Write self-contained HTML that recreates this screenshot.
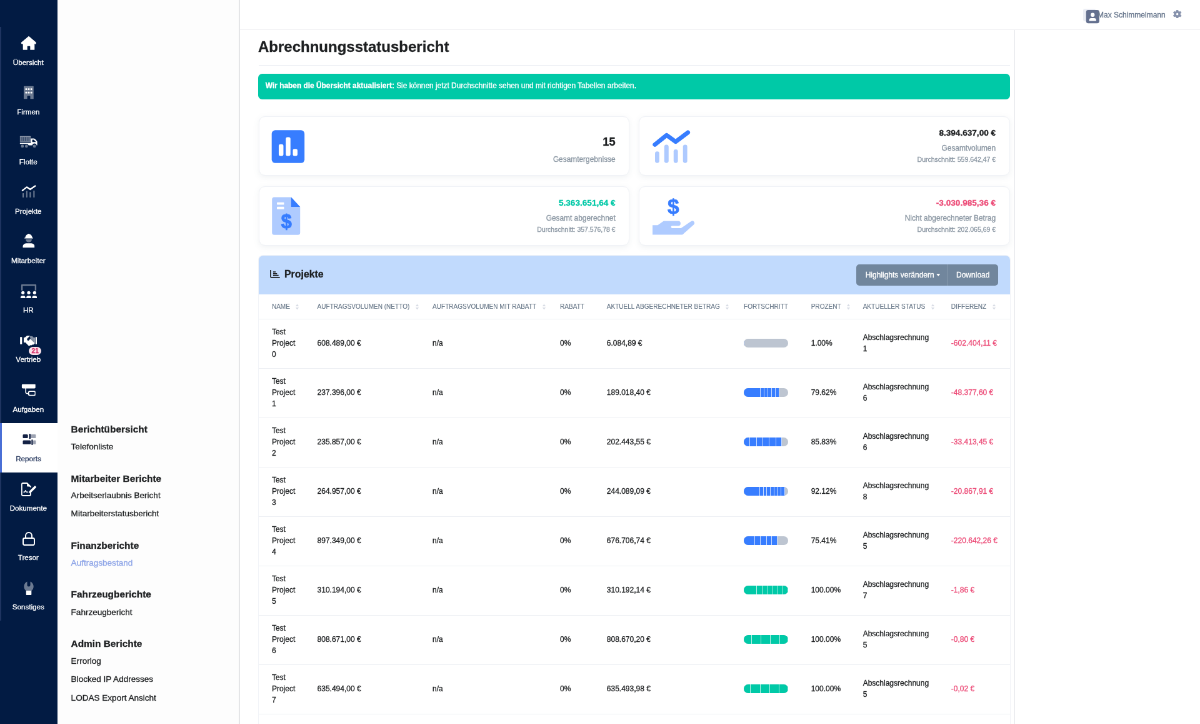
<!DOCTYPE html>
<html lang="de">
<head>
<meta charset="utf-8">
<title>Abrechnungsstatusbericht</title>
<style>
*{box-sizing:border-box;margin:0;padding:0}
html,body{width:1200px;height:724px;overflow:hidden;background:#fff}
body{font-family:"Liberation Sans",Arial,Helvetica,sans-serif;color:#1e2022;-webkit-text-stroke-width:.32px}
#app{position:absolute;left:0;top:0;width:1920px;height:1159px;transform:scale(.625);transform-origin:0 0;overflow:hidden;will-change:transform}
a{text-decoration:none;color:inherit}
/* sidebar */
.sb{position:absolute;left:0;top:0;width:92px;height:1159px;background:#021b43}
.nav{position:absolute;left:0;top:43.1px;width:91.4px;border-left:2.4px solid #1f3460}
.ni{display:block;position:relative;height:79.2px;color:#fff;margin-left:-2.4px;width:92px}
.ni .ic{position:absolute;left:45.9px;top:25.6px;transform:translate(-50%,-50%);line-height:0}
.ni .lb{position:absolute;left:0;width:91.4px;top:48.1px;text-align:center;font-size:11.6px;line-height:17.4px;color:#fff;-webkit-text-stroke-width:.3px}
.ni.act{background:#fff;color:#132144;border-left:3px solid #4a6fd6}
.ni.act .ic{left:43.9px}
.ni.act .lb{color:#1f3158;left:-2.8px;top:48.4px}
.bdg{position:absolute;left:46.7px;top:36.3px;width:19.8px;height:13.9px;border-radius:7px;background:#fbe2ea;color:#d6336c;font-size:10.2px;font-weight:700;line-height:13.9px;text-align:center}
/* submenu */
.sub{position:absolute;left:92px;top:0;width:291.8px;height:1159px;background:#fdfdfd;border-right:2px solid #e4e5e7;z-index:2}
.sub b,.sub span{position:absolute;left:21.6px;white-space:nowrap}
.sub b{font-size:15.4px;line-height:20px;color:#1e2022;font-weight:700}
.sub span{font-size:13.55px;line-height:20px;color:#1e2022}
.sub span.on{color:#8fa6e8}
/* header */
.hd{position:absolute;left:382px;top:0;width:1538px;height:48px;border-bottom:1.4px solid #eff0f2;background:#fff}
.hd .nm{position:absolute;left:1374px;top:16.6px;font-size:12px;line-height:14px;color:#67768c;white-space:nowrap}
/* main */
.main{position:absolute;left:382px;top:48px;width:1242.4px;height:1111px;background:#fff;border-left:0;border-right:1.8px solid #e4e5ea}
h1{position:absolute;left:31px;top:12.7px;font-size:24px;line-height:28px;font-weight:700;color:#1e2022;white-space:nowrap}
.hr{position:absolute;left:31.5px;top:56px;width:1202.8px;height:1.2px;background:#eceef3}
.al{position:absolute;left:30.8px;top:70.2px;width:1203.5px;height:40.6px;border-radius:6.5px;background:#00c9a7;color:#fff;font-size:11.9px;line-height:39.4px;padding-left:12px;white-space:nowrap}
.cd{position:absolute;width:593.6px;height:94.6px;background:#fff;border:1px solid #f0f2f7;border-radius:10px;box-shadow:0 2.5px 8px rgba(140,152,164,.11)}
.cd .v{position:absolute;right:21.5px;font-weight:700;white-space:nowrap;color:#1e2022}
.cd .l{position:absolute;right:21.5px;font-size:11.9px;line-height:14px;color:#8c98a4;white-space:nowrap}
.cd .s{position:absolute;right:21.5px;font-size:10.5px;line-height:12px;color:#8c98a4;white-space:nowrap}
.cd svg{position:absolute;left:-1.3px;top:-.9px}
.tc{position:absolute;left:31.6px;top:360.5px;width:1202.8px;height:900px;border-radius:7px 7px 0 0;background:#fff;box-shadow:0 0 0 1px #f2f4f8}
.th{position:absolute;left:0;top:0;width:100%;height:62px;background:#c1dafd;border-radius:7px 7px 0 0}
.th .ti{position:absolute;left:41.4px;top:20.4px;font-size:15.9px;font-weight:700;line-height:20px;color:#1e2022}
.bg{position:absolute;right:19.2px;top:14px;height:34px;display:flex;border-radius:5px;overflow:hidden}
.bg span{display:block;height:34px;line-height:34px;background:#71869d;color:#fff;font-size:12px;padding:0 14.4px;white-space:nowrap}
.bg span+span{border-left:1.4px solid #8a9cb0}
table{position:absolute;left:0;top:62px;width:1202.8px;border-collapse:collapse;table-layout:fixed}
th{-webkit-text-stroke-width:.12px;height:40px;text-align:left;font-weight:400;font-size:10.05px;color:#677788;padding:0 0 0 12px;white-space:nowrap;border-bottom:1.2px solid #edeff4;vertical-align:middle;line-height:15px}
td{height:79px;font-size:12px;line-height:17.8px;padding:0 0 0 12px;border-bottom:1.2px solid #edeff4;vertical-align:middle;color:#1e2022;white-space:nowrap}
th:first-child,td:first-child{padding-left:21.3px}
td.dg{color:#ed4c78}
.so{margin-left:8.5px;vertical-align:-2.4px}
.pb{width:71.2px;height:14px;border-radius:7px;background:#bdc5d1;overflow:hidden;display:flex;position:relative;top:-1px;left:-.2px}
.sg{display:block;height:14px;background:#377dff;border-right:1.5px solid rgba(255,255,255,.72)}
.sg.g{background:#00c9a7}
</style>
</head>
<body>
<div id="app">
<div class="sb"><div class="nav">
<a class="ni"><span class="ic"><svg width="24.8" height="22.7" viewBox="0 0 24.8 22.7" fill="currentColor"><path d="M12.4 0 .2 10.4a.8.8 0 0 0-.1 1.100l1 1.200a.8.8 0 0 0 1.100.100l.9-.700v9.600a1 1 0 0 0 1 1h5.400a.6.6 0 0 0 .6-.6v-5.300a.6.6 0 0 1 .6-.6h3.400a.6.6 0 0 1 .6.600v5.300a.6.6 0 0 0 .6.600h5.400a1 1 0 0 0 1-1v-9.600l.9.700a.8.8 0 0 0 1.100-.100l1-1.200a.8.800 0 0 0-.1-1.100z"/></svg></span><span class="lb">Übersicht</span></a>
<a class="ni"><span class="ic"><svg width="16.6" height="21" viewBox="0 0 16.6 21" fill="currentColor"><path opacity=".42" d="M1.4 0h13.8a1.4 1.4 0 0 1 1.4 1.4V21h-5.9v-4.3a.9.9 0 0 0-.9-.9H6.8a.9.9 0 0 0-.9.9V21H0V1.4A1.4 1.4 0 0 1 1.4 0z"/><rect x="2.85" y="3.75" width="2.7" height="2.7" rx=".5"/><rect x="6.95" y="3.75" width="2.7" height="2.7" rx=".5"/><rect x="11.05" y="3.75" width="2.7" height="2.7" rx=".5"/><rect x="2.85" y="9.35" width="2.7" height="2.7" rx=".5"/><rect x="6.95" y="9.35" width="2.7" height="2.7" rx=".5"/><rect x="11.05" y="9.35" width="2.7" height="2.7" rx=".5"/></svg></span><span class="lb">Firmen</span></a>
<a class="ni"><span class="ic"><svg width="28.8" height="19.2" viewBox="0 0 28.8 19.2" fill="currentColor"><path opacity=".42" d="M.8 0h16a.8.8 0 0 1 .8.8v8.8H0V.8A.8.8 0 0 1 .8 0z"/><path fill="#021b43" opacity=".6" d="M2.9 1.800h1v6.600h-1zM5.700 1.800h1v6.600h-1zM8.500 1.800h1v6.600h-1zM11.300 1.800h1v6.600h-1zM14.100 1.800h1v6.600h-1z"/><path opacity=".25" d="M0 .8A.8.8 0 0 1 .8 0h16a.8.8 0 0 1 .8.800v.800H0z"/><path d="M0 11h17.6V4.6a.6.6 0 0 1 .6-.6h4.3c.6 0 1.2.3 1.6.7l4 4.2c.4.4.7 1 .7 1.600v3.700a.8.8 0 0 1-.8.8h-1a3.500 3.500 0 0 0-6.900 0H14.200a3.400 3.400 0 0 0-3.400-2.100H0zM20 6v3.800h6L22.800 6.400a1 1 0 0 0-.7-.4z" fill-rule="evenodd"/><g opacity=".42"><circle cx="4.200" cy="16.600" r="2.400"/><circle cx="10.700" cy="16.600" r="2.400"/><circle cx="23.500" cy="16.600" r="2.400"/></g></svg></span><span class="lb">Flotte</span></a>
<a class="ni"><span class="ic"><svg width="23.2" height="20" viewBox="0 0 23.2 20" fill="currentColor"><path d="M1.300 8.800 8.400 3.300 13.900 7 21.900 1.500" fill="none" stroke="currentColor" stroke-width="2.300" stroke-linecap="round" stroke-linejoin="round"/><g opacity=".42"><rect x="1.600" y="13" width="2.100" height="7" rx=".6"/><rect x="7.400" y="9.300" width="2.100" height="10.700" rx=".6"/><rect x="12.900" y="11.200" width="2.100" height="8.800" rx=".6"/><rect x="18.900" y="8.800" width="2.100" height="11.200" rx=".6"/></g></svg></span><span class="lb">Projekte</span></a>
<a class="ni"><span class="ic"><svg width="19.5" height="22.7" viewBox="0 0 19.5 22.7" fill="currentColor"><path d="M9.750 0a1 1 0 0 1 1 .9c2.600.6 4.500 2.900 4.700 5.700h.600a.6.6 0 0 1 .6.6v.6H2.850v-.6a.6.6 0 0 1 .6-.6h.6C4.250 3.800 6.150 1.500 8.750.9a1 1 0 0 1 1-.9z"/><path opacity=".42" d="M4.750 9h10a5 5 0 0 1-10 0z"/><path d="M5.600 15.700h8.300a5.600 5.600 0 0 1 5.600 5.600v.4a1 1 0 0 1-1 1H1a1 1 0 0 1-1-1v-.4a5.600 5.600 0 0 1 5.600-5.600z"/></svg></span><span class="lb">Mitarbeiter</span></a>
<a class="ni"><span class="ic" style="top:26.6px"><svg width="27.8" height="22.2" viewBox="0 0 27.8 22.2" fill="currentColor"><path opacity=".42" d="M3 0h21.800a1.200 1.200 0 0 1 1.200 1.200V9.800h-2.400V2.400H4.200v7.400H1.800V1.200A1.200 1.200 0 0 1 3 0z"/><circle cx="4.6" cy="13.400" r="2.600"/><path d="M0.7 22.200v-.8a3.400 3.400 0 0 1 3.400-3.400h1a3.400 3.400 0 0 1 3.400 3.400v.8z"/><circle cx="13.9" cy="13.400" r="2.600"/><path d="M10 22.200v-.8a3.400 3.400 0 0 1 3.400-3.400h1a3.400 3.400 0 0 1 3.400 3.400v.8z"/><circle cx="23.2" cy="13.400" r="2.600"/><path d="M19.3 22.200v-.8a3.400 3.400 0 0 1 3.400-3.400h1a3.400 3.400 0 0 1 3.400 3.400v.8z"/></svg></span><span class="lb">HR</span></a>
<a class="ni"><span class="ic" style="top:26.4px"><svg width="27.8" height="16.2" viewBox="0 0 27.8 16.2" fill="currentColor"><path d="M0 2.300h3.200v11.600H0zM24.600 2.300h3.200v11.600h-3.200z"/><g transform="translate(0,.2) scale(1,1.16)"><path d="M5.800 2.600h1.800l2.600-2.100a2 2 0 0 1 1.300-.5h4.600l-4.400 3.800a1.900 1.900 0 0 0 2.500 2.800l2.300-2 5.800 4.700v-6.700h1.100v8.800h-1.200l-.3.500c-.6.700-1.600.8-2.300.3l-.3.400c-.6.800-1.800.9-2.600.3l-.8.800c-.8.700-2 .600-2.700-.200l-4.600-4H5.800z"/><path d="M15.300.6h3.600c.5 0 1 .2 1.400.5l2.200 2v7.600l-5.500-4.500-2.700 2.300a1 1 0 0 1-1.400-1.500l3.700-3.200z" opacity=".5"/></g></svg></span><span class="bdg">21</span><span class="lb">Vertrieb</span></a>
<a class="ni"><span class="ic" style="top:26.8px"><svg width="22.7" height="19" viewBox="0 0 22.7 19" fill="currentColor"><rect x="0" y="0" width="22.700" height="6.900" rx="2.200"/><path d="M6.500 6.500v6.600a2 2 0 0 0 2 2h2" fill="none" stroke="currentColor" stroke-width="1.600"/><rect x="11.100" y="11.700" width="10.700" height="6.400" rx="2" fill="none" stroke="currentColor" stroke-width="1.800"/></svg></span><span class="lb">Aufgaben</span></a>
<a class="ni act"><span class="ic" style="top:26.5px"><svg width="21.4" height="18" viewBox="0 0 21.4 18" fill="currentColor"><rect x="0" y="1" width="8.400" height="6" rx="1.500"/><rect x="10.200" y="0" width="2.400" height="8.200" rx=".8"/><rect opacity=".42" x="12.600" y="1" width="8.800" height="6" rx="1.500"/><rect x="0" y="10.500" width="13" height="6.200" rx="1.500"/><rect x="14" y="9.200" width="2.200" height="8.800" rx=".8"/><rect opacity=".42" x="16.200" y="10.500" width="5.200" height="6.200" rx="1.500"/></svg></span><span class="lb">Reports</span></a>
<a class="ni"><span class="ic" style="top:27.0px"><svg width="24.2" height="21.8" viewBox="0 0 24.2 21.8" fill="currentColor"><path d="M14.900 15.500v3.600a1.800 1.800 0 0 1-1.800 1.800H2.700A1.800 1.800 0 0 1 .9 19.100V2.700A1.800 1.800 0 0 1 2.700.9h6.700l5.500 5.500v1.200" fill="none" stroke="currentColor" stroke-width="1.800" stroke-linejoin="round"/><path d="M9.200.9v4.200a1.300 1.300 0 0 0 1.300 1.300h4.400z"/><path d="M4 15.200h1.600l1.200-2.600 1.600 2.600h2.400" fill="none" stroke="currentColor" stroke-width="1.400" stroke-linejoin="round" stroke-linecap="round"/><path d="M12.300 16.900l.5-3 8.300-8.300a1.300 1.300 0 0 1 1.800 0l.7.700a1.300 1.300 0 0 1 0 1.800l-8.300 8.300z"/></svg></span><span class="lb">Dokumente</span></a>
<a class="ni"><span class="ic" style="top:27.2px"><svg width="20" height="22.2" viewBox="0 0 20 22.2" fill="currentColor"><rect x="1" y="10.200" width="18" height="11" rx="2.400" fill="none" stroke="currentColor" stroke-width="2"/><path d="M5 10V6.200a5 5 0 0 1 10 0V10" fill="none" stroke="currentColor" stroke-width="2"/></svg></span><span class="lb">Tresor</span></a>
<a class="ni"><span class="ic" style="top:27.0px"><svg width="17.6" height="22.2" viewBox="0 0 17.6 22.2" fill="currentColor"><path opacity=".42" d="M6.300.500v5.600a2.500 2.500 0 0 0 5 0V.5a8.800 8.800 0 0 1 2.600 14.200l-.700.700v.800H4.400v-.800l-.700-.700A8.800 8.800 0 0 1 6.300.5z"/><rect x="4.500" y="15" width="8.600" height="7.200" rx="1"/></svg></span><span class="lb">Sonstiges</span></a>
</div></div>
<div class="sub">
<b style="top:677.4px">Berichtübersicht</b>
<span style="top:705.4px">Telefonliste</span>
<b style="top:755.6px">Mitarbeiter Berichte</b>
<span style="top:783.4px">Arbeitserlaubnis Bericht</span>
<span style="top:812.4px">Mitarbeiterstatusbericht</span>
<b style="top:862.8px">Finanzberichte</b>
<span class="on" style="top:890.8px">Auftragsbestand</span>
<b style="top:941.2px">Fahrzeugberichte</b>
<span style="top:969.8px">Fahrzeugbericht</span>
<b style="top:1019.9px">Admin Berichte</b>
<span style="top:1047.9px">Errorlog</span>
<span style="top:1077.4px">Blocked IP Addresses</span>
<span style="top:1106.6px">LODAS Export Ansicht</span>
</div>
<div class="hd">
<svg style="position:absolute;left:1350.5px;top:14px" width="27" height="24" viewBox="0 0 27 24"><rect x="0" y="0" width="20" height="20" rx="3" fill="#eceef5"/><rect x="4.7" y="2" width="21.2" height="21.2" rx="3.4" fill="#64708f"/><circle cx="15.2" cy="9.800" r="3.200" fill="#fff"/><path d="M9.600 19.500v-1.200a3.200 3.200 0 0 1 3.200-3.200h4.800a3.200 3.200 0 0 1 3.200 3.200v1.200z" fill="#fff"/></svg>
<span class="nm">Max Schimmelmann</span>
<svg style="position:absolute;left:1494.700px;top:15.800px" width="13.200" height="13.200" viewBox="0 0 13.200 13.200"><path d="M5.29 0.13 7.91 0.13 8.05 1.92 9.93 3.00 11.55 2.23 12.86 4.50 11.38 5.51 11.38 7.69 12.86 8.70 11.55 10.97 9.93 10.19 8.05 11.28 7.91 13.07 5.29 13.07 5.15 11.28 3.27 10.20 1.65 10.97 0.34 8.70 1.82 7.69 1.82 5.51 0.34 4.50 1.65 2.23 3.27 3.01 5.15 1.92z M6.600 4.400a2.200 2.200 0 1 0 0 4.400 2.200 2.200 0 0 0 0-4.400z" fill="#8590ab" fill-rule="evenodd" stroke="#8590ab" stroke-width=".8" stroke-linejoin="round"/></svg>
</div>
<div class="main">
<h1>Abrechnungsstatusbericht</h1>
<div class="hr"></div>
<div class="al"><b>Wir haben die Übersicht aktualisiert:</b> Sie können jetzt Durchschnitte sehen und mit richtigen Tabellen arbeiten.</div>

<div class="cd" style="left:31.6px;top:138.3px">
<svg width="100" height="94" viewBox="0 0 100 94"><rect x="21.700" y="22.300" width="52.500" height="52.500" rx="5.600" fill="#377dff"/><g fill="#fff"><rect x="32.950" y="44.800" width="7.500" height="18.750" rx="2.800"/><rect x="44.200" y="33.550" width="7.500" height="30" rx="2.800"/><rect x="55.450" y="52.300" width="7.500" height="11.250" rx="2.800"/></g></svg>
<div class="v" style="top:28.5px;font-size:18.3px;line-height:22px">15</div>
<div class="l" style="top:60.6px">Gesamtergebnisse</div>
</div>

<div class="cd" style="left:640px;top:138.3px">
<svg width="100" height="94" viewBox="0 0 100 94"><g fill="#377dff" opacity=".4"><rect x="26" y="56.300" width="6.900" height="18.400" rx="3.400"/><rect x="40.850" y="45.400" width="6.900" height="29.300" rx="3.400"/><rect x="55.750" y="52.900" width="6.900" height="21.800" rx="3.400"/><rect x="70.750" y="45.400" width="6.900" height="29.300" rx="3.400"/></g><path d="M25.800 45.400 44.600 30.300 59 40.700 78.600 25.900" fill="none" stroke="#377dff" stroke-width="6.900" stroke-linecap="round" stroke-linejoin="round"/></svg>
<div class="v" style="top:18.1px;font-size:13.6px;line-height:16px">8.394.637,00 €</div>
<div class="l" style="top:42.5px">Gesamtvolumen</div>
<div class="s" style="top:61.5px">Durchschnitt: 559.642,47 €</div>
</div>

<div class="cd" style="left:31.6px;top:250px">
<svg width="100" height="94" viewBox="0 0 100 94"><path d="M25.700 17.500H52.800L67.200 33v41.300a3.500 3.500 0 0 1-3.500 3.500H25.700a3.500 3.500 0 0 1-3.500-3.500V21a3.500 3.500 0 0 1 3.500-3.500z" fill="#377dff" opacity=".4"/><path d="M52.800 17.500 67.200 33H52.800z" fill="#377dff"/><rect x="30" y="25.800" width="11.500" height="3.700" rx=".8" fill="#fff"/><rect x="30" y="32.800" width="11.500" height="3.900" rx=".8" fill="#fff"/><text x="45.200" y="67.200" text-anchor="middle" font-family="Liberation Sans, sans-serif" font-weight="700" font-size="30.500" fill="#377dff" stroke="#377dff" stroke-width="1.100" stroke-linejoin="round">$</text></svg>
<div class="v" style="top:18.1px;font-size:13.6px;line-height:16px;color:#00c9a7">5.363.651,64 €</div>
<div class="l" style="top:42.5px">Gesamt abgerechnet</div>
<div class="s" style="top:61.5px">Durchschnitt: 357.576,78 €</div>
</div>

<div class="cd" style="left:640px;top:250px">
<svg width="100" height="94" viewBox="0 0 100 94"><path d="M22.100 62.300h8.200l9.700-6.700h23a3.850 3.850 0 0 1 0 7.700H53.300a1.800 1.800 0 0 0 0 3.600h14.400l16.100-10.900a3.400 3.400 0 0 1 4.100 5.400L69.900 77.500H22.100z" fill="#377dff" opacity=".4"/><text x="55.400" y="43.600" text-anchor="middle" font-family="Liberation Sans, sans-serif" font-weight="700" font-size="33.500" fill="#377dff" stroke="#377dff" stroke-width=".700" stroke-linejoin="round">$</text></svg>
<div class="v" style="top:18.1px;font-size:13.6px;line-height:16px;color:#ed4c78">-3.030.985,36 €</div>
<div class="l" style="top:42.5px">Nicht abgerechneter Betrag</div>
<div class="s" style="top:61.5px">Durchschnitt: 202.065,69 €</div>
</div>

<div class="tc">
<div class="th">
<svg style="position:absolute;left:18.6px;top:23.1px" width="15.8" height="13" viewBox="0 0 17 14"><path d="M1 0v11.500a1.300 1.300 0 0 0 1.300 1.300H16.200" fill="none" stroke="#1e2022" stroke-width="1.800" stroke-linecap="round"/><path d="M5.300 3.400h4.400M5.300 6.300h6.800M5.300 9.200h9.400" fill="none" stroke="#1e2022" stroke-width="1.900"/></svg>
<span class="ti">Projekte</span>
<div class="bg"><span style="padding:0 10.9px 0 14.6px">Highlights verändern <svg width="6.6" height="4" viewBox="0 0 8 5" style="vertical-align:2px;margin-left:-.4px;margin-right:-.4px"><path d="M0 0h8L4 5z" fill="#fff"/></svg></span><span style="padding:0 13.8px 0 14.3px">Download</span></div>
</div>
<table>
<colgroup><col style="width:82px"><col style="width:184.500px"><col style="width:204px"><col style="width:74.700px"><col style="width:219.300px"><col style="width:107.600px"><col style="width:83px"><col style="width:141.200px"><col style="width:106.500px"></colgroup>
<thead><tr><th>NAME<svg class="so" width="7" height="10" viewBox="0 0 7 10"><path d="M3.5 0.6 6.2 4H0.8zM3.5 9.4 0.8 6h5.4z" fill="#d9dde6"/></svg></th><th>AUFTRAGSVOLUMEN (NETTO)<svg class="so" width="7" height="10" viewBox="0 0 7 10"><path d="M3.5 0.6 6.2 4H0.8zM3.5 9.4 0.8 6h5.4z" fill="#d9dde6"/></svg></th><th>AUFTRAGSVOLUMEN MIT RABATT<svg class="so" width="7" height="10" viewBox="0 0 7 10"><path d="M3.5 0.6 6.2 4H0.8zM3.5 9.4 0.8 6h5.4z" fill="#d9dde6"/></svg></th><th>RABATT</th><th>AKTUELL ABGERECHNETER BETRAG<svg class="so" width="7" height="10" viewBox="0 0 7 10"><path d="M3.5 0.6 6.2 4H0.8zM3.5 9.4 0.8 6h5.4z" fill="#d9dde6"/></svg></th><th>FORTSCHRITT</th><th>PROZENT<svg class="so" width="7" height="10" viewBox="0 0 7 10"><path d="M3.5 0.6 6.2 4H0.8zM3.5 9.4 0.8 6h5.4z" fill="#d9dde6"/></svg></th><th>AKTUELLER STATUS<svg class="so" width="7" height="10" viewBox="0 0 7 10"><path d="M3.5 0.6 6.2 4H0.8zM3.5 9.4 0.8 6h5.4z" fill="#d9dde6"/></svg></th><th>DIFFERENZ<svg class="so" width="7" height="10" viewBox="0 0 7 10"><path d="M3.5 0.6 6.2 4H0.8zM3.5 9.4 0.8 6h5.4z" fill="#d9dde6"/></svg></th></tr></thead>
<tbody>
<tr><td class="c1">Test<br>Project<br>0</td><td>608.489,00 €</td><td>n/a</td><td>0%</td><td>6.084,89 €</td><td><div class="pb"><i class="sg" style="width:1.02px"></i></div></td><td>1.00%</td><td>Abschlagsrechnung<br>1</td><td class="dg">-602.404,11 €</td></tr>
<tr><td class="c1">Test<br>Project<br>1</td><td>237.396,00 €</td><td>n/a</td><td>0%</td><td>189.018,40 €</td><td><div class="pb"><i class="sg" style="width:26.85px"></i><i class="sg" style="width:6.51px"></i><i class="sg" style="width:5.70px"></i><i class="sg" style="width:6.51px"></i><i class="sg" style="width:5.70px"></i><i class="sg" style="width:5.59px"></i></div></td><td>79.62%</td><td>Abschlagsrechnung<br>6</td><td class="dg">-48.377,60 €</td></tr>
<tr><td class="c1">Test<br>Project<br>2</td><td>235.857,00 €</td><td>n/a</td><td>0%</td><td>202.443,55 €</td><td><div class="pb"><i class="sg" style="width:9.76px"></i><i class="sg" style="width:10.99px"></i><i class="sg" style="width:10.17px"></i><i class="sg" style="width:10.17px"></i><i class="sg" style="width:10.99px"></i><i class="sg" style="width:9.05px"></i></div></td><td>85.83%</td><td>Abschlagsrechnung<br>6</td><td class="dg">-33.413,45 €</td></tr>
<tr><td class="c1">Test<br>Project<br>3</td><td>264.957,00 €</td><td>n/a</td><td>0%</td><td>244.089,09 €</td><td><div class="pb"><i class="sg" style="width:26.04px"></i><i class="sg" style="width:5.70px"></i><i class="sg" style="width:5.70px"></i><i class="sg" style="width:5.70px"></i><i class="sg" style="width:5.70px"></i><i class="sg" style="width:5.70px"></i><i class="sg" style="width:5.70px"></i><i class="sg" style="width:5.49px"></i></div></td><td>92.12%</td><td>Abschlagsrechnung<br>8</td><td class="dg">-20.867,91 €</td></tr>
<tr><td class="c1">Test<br>Project<br>4</td><td>897.349,00 €</td><td>n/a</td><td>0%</td><td>676.706,74 €</td><td><div class="pb"><i class="sg" style="width:17.90px"></i><i class="sg" style="width:9.36px"></i><i class="sg" style="width:9.36px"></i><i class="sg" style="width:8.95px"></i><i class="sg" style="width:8.14px"></i></div></td><td>75.41%</td><td>Abschlagsrechnung<br>5</td><td class="dg">-220.642,26 €</td></tr>
<tr><td class="c1">Test<br>Project<br>5</td><td>310.194,00 €</td><td>n/a</td><td>0%</td><td>310.192,14 €</td><td><div class="pb"><i class="sg g" style="width:21.56px"></i><i class="sg g" style="width:8.54px"></i><i class="sg g" style="width:8.54px"></i><i class="sg g" style="width:8.54px"></i><i class="sg g" style="width:8.14px"></i><i class="sg g" style="width:8.14px"></i><i class="sg g" style="width:7.73px"></i></div></td><td>100.00%</td><td>Abschlagsrechnung<br>7</td><td class="dg">-1,86 €</td></tr>
<tr><td class="c1">Test<br>Project<br>6</td><td>808.671,00 €</td><td>n/a</td><td>0%</td><td>808.670,20 €</td><td><div class="pb"><i class="sg g" style="width:13.43px"></i><i class="sg g" style="width:15.05px"></i><i class="sg g" style="width:14.65px"></i><i class="sg g" style="width:14.65px"></i><i class="sg g" style="width:13.43px"></i></div></td><td>100.00%</td><td>Abschlagsrechnung<br>5</td><td class="dg">-0,80 €</td></tr>
<tr><td class="c1">Test<br>Project<br>7</td><td>635.494,00 €</td><td>n/a</td><td>0%</td><td>635.493,98 €</td><td><div class="pb"><i class="sg g" style="width:10.99px"></i><i class="sg g" style="width:16.27px"></i><i class="sg g" style="width:15.05px"></i><i class="sg g" style="width:14.65px"></i><i class="sg g" style="width:14.24px"></i></div></td><td>100.00%</td><td>Abschlagsrechnung<br>5</td><td class="dg">-0,02 €</td></tr>
</tbody>
</table>
</div>
</div>
</div>
</body>
</html>
